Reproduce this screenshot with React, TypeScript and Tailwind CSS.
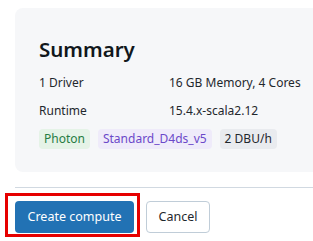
import React from "react";

const Badge = ({ label, tone }: { label: string; tone: "green" | "purple" | "gray" }) => {
  const tones = {
    green: "bg-[#e5f3e7] text-[#277c43]",
    purple: "bg-[#efebfa] text-[#6b48c9]",
    gray: "bg-[#e9ebef] text-[#1f272d]",
  };
  return (
    <span className={`h-[20px] px-[5px] rounded-[4px] flex items-center text-[12px] leading-none ${tones[tone]}`}>
      {label}
    </span>
  );
};

const App: React.FC = () => {
  return (
    <div
      className="relative w-[313px] h-[241px] overflow-hidden bg-white text-[#1f272d]"
      style={{ fontFamily: '"Noto Sans", "Open Sans", sans-serif' }}
    >
      {/* Summary card */}
      <div className="ml-[15px] mt-[8px] mr-[-20px] h-[164px] rounded-[8px] bg-[#f6f7f9] pl-[24px] pt-[26px]">
        <h2 className="text-[20.5px] leading-[30px] font-semibold text-[#11171c]">Summary</h2>
        <div className="mt-[9px] flex flex-col gap-[8px] text-[12px]">
          <div className="flex h-[20px] items-center">
            <span className="w-[130px]">1 Driver</span>
            <span>16 GB Memory, 4 Cores</span>
          </div>
          <div className="flex h-[20px] items-center">
            <span className="w-[130px]">Runtime</span>
            <span>15.4.x-scala2.12</span>
          </div>
        </div>
        <div className="mt-[8px] flex gap-[8px]">
          <Badge label="Photon" tone="green" />
          <Badge label="Standard_D4ds_v5" tone="purple" />
          <Badge label="2 DBU/h" tone="gray" />
        </div>
      </div>

      {/* Footer */}
      <div className="ml-[15px] mt-[15px] border-t border-[#d1d9e1]" />
      <div className="ml-[15px] mt-[13px] flex gap-[12px] text-[12.5px]">
        <div className="relative">
          <button className="h-[32px] w-[119px] rounded-[4px] bg-[#2272b4] text-white">Create compute</button>
          {/* highlight */}
          <div className="absolute left-[-10px] top-[-8px] w-[135px] h-[44px] border-[3px] border-[#e60000] pointer-events-none" />
        </div>
        <button className="h-[32px] w-[64px] rounded-[4px] border border-[#c0cdd8] bg-white">Cancel</button>
      </div>
    </div>
  );
};

export default App;
